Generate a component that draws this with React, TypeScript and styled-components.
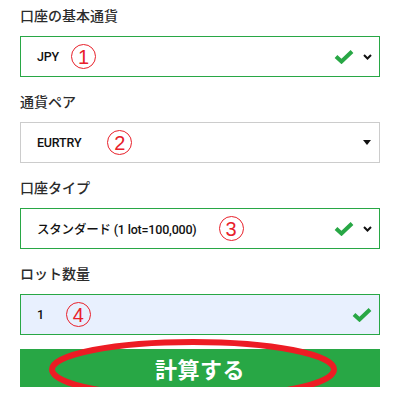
import React from "react";
import styled, { createGlobalStyle } from "styled-components";

const GlobalStyle = createGlobalStyle`
  html, body {
    margin: 0;
    padding: 0;
    background: #ffffff;
  }
  body {
    font-family: Roboto, "Noto Sans CJK JP", "Liberation Sans", sans-serif;
  }
`;

const Page = styled.div`
  width: 399px;
  padding: 4px 19px 0 20px;
  box-sizing: border-box;
`;

const Group = styled.div`
  margin-bottom: 13px;
`;

const Label = styled.div`
  font-family: "Noto Sans CJK JP", sans-serif;
  font-size: 14px;
  font-weight: 500;
  line-height: 22px;
  color: #2b2b2b;
  margin-bottom: 10px;
`;

const Field = styled.div<{ $tone: "valid" | "plain" | "filled" }>`
  height: 41px;
  box-sizing: border-box;
  display: flex;
  align-items: center;
  padding: 0 7px 0 16px;
  border: 1px solid ${(p) => (p.$tone === "plain" ? "#cccccc" : "#28a745")};
  background: ${(p) => (p.$tone === "filled" ? "#e8f0fe" : "#ffffff")};
`;

const Value = styled.span`
  font-family: Roboto, "Noto Sans CJK JP", sans-serif;
  font-size: 12.5px;
  font-weight: 500;
  color: #111111;
  white-space: nowrap;
  letter-spacing: -0.2px;
`;

const Circled = styled.span<{ $gap: number }>`
  margin-left: ${(p) => p.$gap}px;
  width: 25px;
  height: 25px;
  box-sizing: border-box;
  border: 1.4px solid #e8202a;
  border-radius: 50%;
  display: inline-flex;
  align-items: center;
  justify-content: center;
  color: #e8202a;
  font-family: "Liberation Sans", sans-serif;
  font-size: 20px;
  line-height: 1;
`;

const Icons = styled.div`
  margin-left: auto;
  display: flex;
  align-items: center;
  gap: 9px;
`;

const ButtonWrap = styled.div`
  position: relative;
  margin-top: 14px;
`;

const CalcButton = styled.button`
  width: 100%;
  height: 38px;
  border: none;
  background: #28a745;
  color: #ffffff;
  font-family: "Noto Sans CJK JP", sans-serif;
  font-size: 22px;
  font-weight: 700;
  letter-spacing: 0.5px;
  display: flex;
  align-items: center;
  justify-content: center;
  padding: 0;
`;

const Ring = styled.svg`
  position: absolute;
  left: 29px;
  top: -10px;
  pointer-events: none;
`;

const Check = () => (
  <svg width="20" height="15" viewBox="0 0 20 15">
    <path d="M2 7.5 L7.5 12.5 L18 2.5" fill="none" stroke="#28a745" strokeWidth="4" strokeLinejoin="miter" />
  </svg>
);

const Chevron = () => (
  <svg width="9" height="6" viewBox="0 0 9 6">
    <path d="M1 1 L4.5 4.5 L8 1" fill="none" stroke="#111" strokeWidth="2" />
  </svg>
);

const Caret = () => (
  <svg width="8" height="5" viewBox="0 0 8 5" style={{ marginRight: 1 }}>
    <path d="M0 0 L8 0 L4 5 Z" fill="#111" />
  </svg>
);

export default function App() {
  return (
    <>
      <GlobalStyle />
      <Page>
        <Group>
          <Label>口座の基本通貨</Label>
          <Field $tone="valid">
            <Value>JPY</Value>
            <Circled $gap={12}>1</Circled>
            <Icons>
              <Check />
              <Chevron />
            </Icons>
          </Field>
        </Group>
        <Group>
          <Label>通貨ペア</Label>
          <Field $tone="plain">
            <Value>EURTRY</Value>
            <Circled $gap={26}>2</Circled>
            <Icons>
              <Caret />
            </Icons>
          </Field>
        </Group>
        <Group>
          <Label>口座タイプ</Label>
          <Field $tone="valid">
            <Value>スタンダード (1 lot=100,000)</Value>
            <Circled $gap={22}>3</Circled>
            <Icons>
              <Check />
              <Chevron />
            </Icons>
          </Field>
        </Group>
        <Group>
          <Label>ロット数量</Label>
          <Field $tone="filled">
            <Value>1</Value>
            <Circled $gap={22}>4</Circled>
            <Icons>
              <Check />
            </Icons>
          </Field>
        </Group>
        <ButtonWrap>
          <CalcButton>計算する</CalcButton>
          <Ring width="290" height="62" viewBox="0 0 290 62">
            <ellipse cx="144" cy="30.5" rx="141" ry="27.5" fill="none" stroke="#ed1c24" strokeWidth="6" />
          </Ring>
        </ButtonWrap>
      </Page>
    </>
  );
}
